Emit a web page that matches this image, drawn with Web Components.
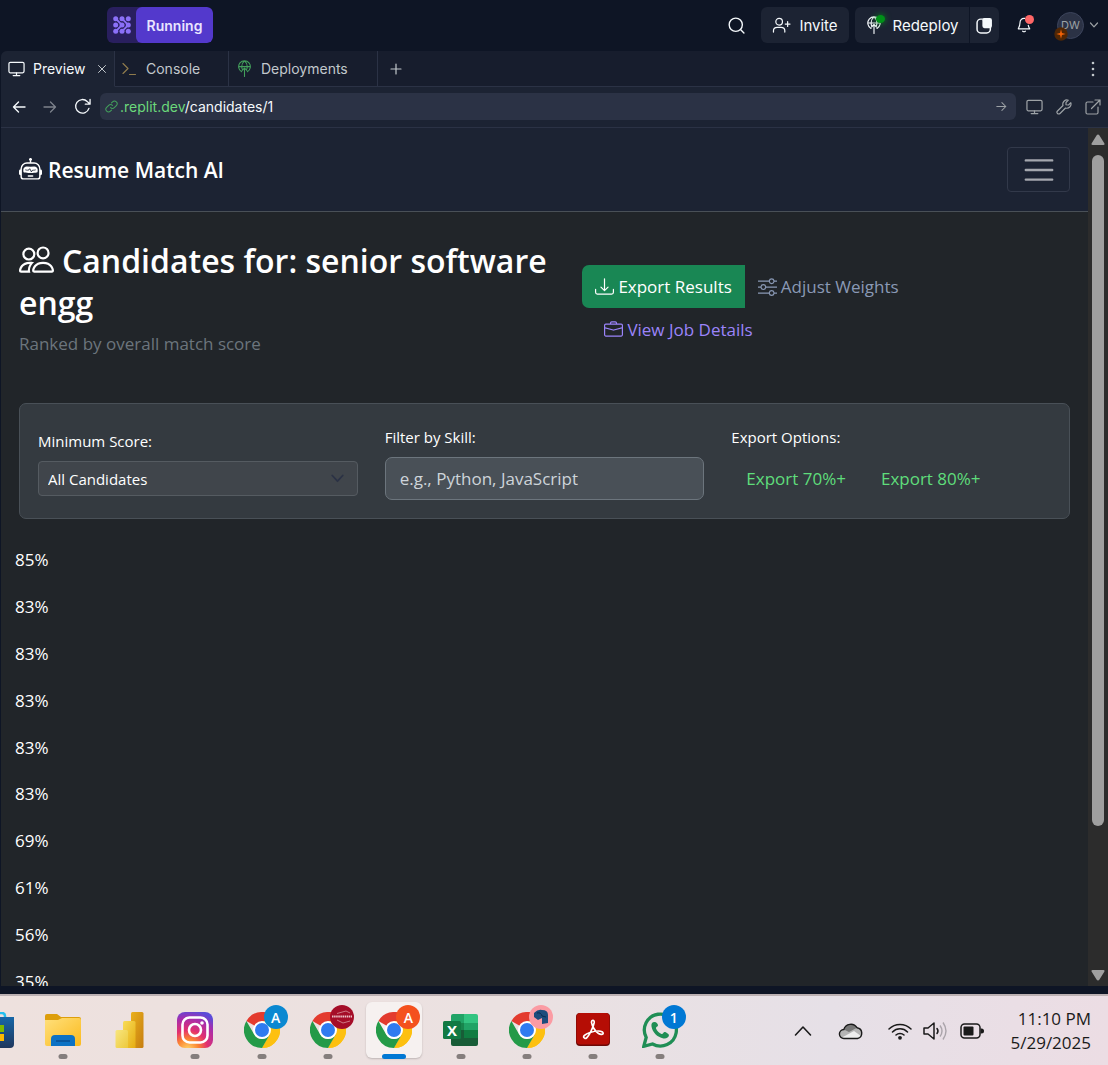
<!DOCTYPE html>
<html lang="en">
<head>
<meta charset="utf-8">
<title>Resume Match AI - Candidates</title>
<style>
html,body{height:100%}
body{margin:0;background:#0e1525;overflow:hidden;--ui:Inter,"Liberation Sans",sans-serif;--app:"Open Sans","Noto Sans",sans-serif;font-family:var(--ui)}
</style>
</head>
<body>
<work-space>
  <ide-header></ide-header>
  <ide-tabs></ide-tabs>
  <address-bar></address-bar>
  <web-view>
    <app-navbar>Resume Match AI</app-navbar>
    <candidates-head><span slot="title">Candidates for: senior software engg</span><span slot="sub">Ranked by overall match score</span></candidates-head>
    <filter-panel></filter-panel>
    <score-list scores="85 83 83 83 83 83 69 61 56 35"></score-list>
  </web-view>
  <task-bar></task-bar>
</work-space>
<script>
const define=(name,html,setup)=>customElements.define(name,class extends HTMLElement{
  constructor(){super();this.attachShadow({mode:'open'});}
  connectedCallback(){
    this.shadowRoot.innerHTML=`<style>:host,*{box-sizing:border-box}button,input,select{font:inherit;color:inherit;margin:0}button{border:0;background:none;padding:0;display:flex;align-items:center;justify-content:center}a{color:inherit;text-decoration:none}</style>`+html;
    if(setup)setup(this);
  }
});

const S='fill="none" stroke="currentColor" stroke-linecap="round" stroke-linejoin="round"';
const chrome=`<path d="M18 18 2.4 9A18 18 0 0 1 33.6 9z" fill="#e33b2e"/><path d="M18 0a18 18 0 0 1 15.6 9H18z" fill="#e33b2e"/><path d="M18 18 33.6 9A18 18 0 0 1 18 36l7.8-13.500z" fill="#fdc010"/><path d="M18 9h15.600A18 18 0 0 1 18 36l7.800-13.500z" fill="#fdc010"/><path d="M2.400 9A18 18 0 0 0 18 36l7.800-13.500a9 9 0 0 1-15.600 0z" fill="#249a48"/><circle cx="18" cy="18" r="9" fill="#fff"/><circle cx="18" cy="18" r="7" fill="#2f7bf0"/>`;
const icons={
 replit:['0 0 18 18','<g fill="#8b70f8"><circle cx="2.700" cy="2.700" r="2.500"/><circle cx="9" cy="2.700" r="2.500"/><circle cx="15.300" cy="2.700" r="2.500"/><circle cx="2.700" cy="9" r="2.500"/><circle cx="9" cy="9" r="2.500"/><circle cx="15.300" cy="9" r="2.500"/><circle cx="2.700" cy="15.300" r="2.500"/><circle cx="9" cy="15.300" r="2.500"/><circle cx="15.300" cy="15.300" r="2.500"/></g><path d="m2.700 2.700 6.300 6.300-6.300 6.300M9 2.700 15.300 9 9 15.300" fill="none" stroke="#8b70f8" stroke-width="1.800"/>'],
 search:['0 0 16 16',`<g ${S} stroke-width="1.300"><circle cx="7.300" cy="7.300" r="6.200"/><path d="m12 12 3 3"/></g>`],
 invite:['0 0 20 18',`<g ${S} stroke-width="1.300"><circle cx="7.500" cy="5" r="3.500"/><path d="M1.500 16v-1.500q0-3.500 4-3.500h4q4 0 4 3.500V16M16.500 5v5M14 7.500h5"/></g>`],
 deploy:['0 0 18 18',`<g ${S} stroke-width="1.150"><path d="M6 12.500a6.200 6.200 0 1 1 6 0M9 17.500V8.500M6.500 11 9 8.500 11.500 11M2.800 7h12.400M6.500 9.500C5.500 6 6.500 3 9 .900 11.500 3 12.500 6 11.500 9.500"/></g>`],
 panes:['0 0 16 16',`<rect x="1" y="2" width="12.500" height="13" rx="3.500" ${S} stroke-width="1.400"/><rect x="6" y="1" width="9" height="9.500" rx="2" fill="currentColor"/>`],
 bell:['0 0 16 18',`<g ${S} stroke-width="1.300"><path d="M9 1.600C5 1 3.500 4 3.500 6.500 3.500 10 2.500 11.500 1.500 13.300h13C13.500 12 13 11 12.800 9.500M6.500 16q1.500 1.200 3 0"/></g>`],
 chevron:['0 0 10 10',`<path d="M1.500 3 5 6.800 8.500 3" ${S} stroke-width="1.200"/>`],
 star:['0 0 14 14','<circle cx="7" cy="7" r="6.700" fill="#502705"/><path d="M7 2.300 8 6l3.700 1L8 8l-1 3.700L6 8 2.300 7 6 6z" fill="#f26207"/>'],
 monitor:['0 0 18 16',`<g ${S} stroke-width="1.300"><rect x="1" y="1" width="16" height="11" rx="1.500"/><path d="M9 12v3M5.500 15h7"/></g>`],
 close:['0 0 10 10',`<path d="m1.500 1.500 7 7m0-7-7 7" ${S}/>`],
 prompt:['0 0 14 14',`<path d="m1 1.500 5 5-5 5M7.500 12.500h6" ${S} stroke-width="1.150"/>`],
 plus:['0 0 12 12',`<path d="M6 1v10M1 6h10" ${S} stroke-width="1.200"/>`],
 dots:['0 0 4 16','<g fill="currentColor"><circle cx="2" cy="2" r="1.300"/><circle cx="2" cy="8" r="1.300"/><circle cx="2" cy="14" r="1.300"/></g>'],
 left:['0 0 14 14',`<path d="M13 7H1.500M6.500 2l-5 5 5 5" ${S} stroke-width="1.400"/>`],
 right:['0 0 14 14',`<path d="M1 7h11.500M7.500 2l5 5-5 5" ${S} stroke-width="1.300"/>`],
 reload:['0 0 18 18',`<path d="M15.800 11A7.200 7.200 0 1 1 14 3.700L17 6.500M17 1.500v5h-5" ${S} stroke-width="1.400"/>`],
 link:['0 0 14 14',`<g ${S} stroke-width="1.100"><path d="M6 8.200a2.800 2.800 0 0 0 4 0l2.200-2.200a2.800 2.800 0 0 0-4-4L7 3.200"/><path d="M8 5.800a2.800 2.800 0 0 0-4 0L1.800 8a2.800 2.800 0 0 0 4 4L7 10.800"/></g>`],
 wrench:['0 0 16 16',`<path d="M10 5.800 10 3.500 12.300 1.200A4.200 4.200 0 0 0 7 6.500L1.500 12a1.700 1.700 0 0 0 2.500 2.500L9.500 9A4.200 4.200 0 0 0 14.800 3.700L12.500 6z" ${S} stroke-width="1.150"/>`],
 open:['0 0 16 16',`<path d="M8 3H2.500Q1 3 1 4.500v9Q1 15 2.500 15h9q1.500 0 1.500-1.500V8M10 1h5v5M15 1 6.500 9.500" ${S} stroke-width="1.200"/>`],
 robot:['0 0 16 16','<path fill="currentColor" d="M6 12.500a.5.5 0 0 1 .5-.5h3a.5.5 0 0 1 0 1h-3a.5.5 0 0 1-.5-.5ZM3 8.062C3 6.760 4.235 5.765 5.530 5.886a26.580 26.580 0 0 0 4.940 0C11.765 5.765 13 6.760 13 8.062v1.157a.933.933 0 0 1-.765.935c-.845.147-2.340.346-4.235.346-1.895 0-3.390-.2-4.235-.346A.933.933 0 0 1 3 9.219V8.062Zm4.542-.827a.25.25 0 0 0-.217.068l-.920.900a24.767 24.767 0 0 1-1.871-.183.25.25 0 0 0-.068.495c.550.076 1.232.149 2.020.193a.25.25 0 0 0 .189-.071l.754-.736.847 1.710a.25.25 0 0 0 .404.062l.932-.970a25.286 25.286 0 0 0 1.922-.188.25.25 0 0 0-.068-.495c-.538.074-1.207.145-1.980.189a.25.25 0 0 0-.166.076l-.754.785-.842-1.700a.25.25 0 0 0-.182-.135Z"/><path fill="currentColor" d="M8.500 1.866a1 1 0 1 0-1 0V3h-2A4.500 4.500 0 0 0 1 7.500V8a1 1 0 0 0-1 1v2a1 1 0 0 0 1 1v1a2 2 0 0 0 2 2h10a2 2 0 0 0 2-2v-1a1 1 0 0 0 1-1V9a1 1 0 0 0-1-1v-.5A4.500 4.500 0 0 0 10.500 3h-2V1.866ZM14 7.500V13a1 1 0 0 1-1 1H3a1 1 0 0 1-1-1V7.500A3.500 3.500 0 0 1 5.500 4h5A3.500 3.500 0 0 1 14 7.500Z"/>'],
 people:['0 0 16 16','<path fill="currentColor" d="M15 14s1 0 1-1-1-4-5-4-5 3-5 4 1 1 1 1h8Zm-7.978-1A.261.261 0 0 1 7 12.996c.001-.264.167-1.030.760-1.720C8.312 10.629 9.282 10 11 10c1.717 0 2.687.630 3.240 1.276.593.690.758 1.457.760 1.720l-.008.002a.274.274 0 0 1-.014.002H7.022ZM11 7a2 2 0 1 0 0-4 2 2 0 0 0 0 4Zm3-2a3 3 0 1 1-6 0 3 3 0 0 1 6 0ZM6.936 9.280a5.880 5.880 0 0 0-1.230-.247A7.350 7.350 0 0 0 5 9c-4 0-5 3-5 4 0 .667.333 1 1 1h4.216A2.238 2.238 0 0 1 5 13c0-1.010.377-2.042 1.090-2.904.243-.294.526-.569.846-.816ZM4.920 10A5.493 5.493 0 0 0 4 13H1c0-.260.164-1.030.760-1.724.545-.636 1.492-1.256 3.160-1.275ZM1.500 5.500a3 3 0 1 1 6 0 3 3 0 0 1-6 0Zm3-2a2 2 0 1 0 0 4 2 2 0 0 0 0-4Z"/>'],
 download:['0 0 16 16','<path fill="currentColor" d="M.5 9.900a.5.5 0 0 1 .5.5v2.500a1 1 0 0 0 1 1h12a1 1 0 0 0 1-1v-2.500a.5.5 0 0 1 1 0v2.500a2 2 0 0 1-2 2H2a2 2 0 0 1-2-2v-2.500a.5.5 0 0 1 .5-.5z"/><path fill="currentColor" d="M7.646 11.854a.5.5 0 0 0 .708 0l3-3a.5.5 0 0 0-.708-.708L8.500 10.293V1.500a.5.5 0 0 0-1 0v8.793L5.354 8.146a.5.5 0 1 0-.708.708l3 3z"/>'],
 sliders:['0 0 16 16','<path fill="currentColor" fill-rule="evenodd" d="M11.500 2a1.500 1.500 0 1 0 0 3 1.500 1.500 0 0 0 0-3zM9.050 3a2.500 2.500 0 0 1 4.900 0H16v1h-2.050a2.500 2.500 0 0 1-4.900 0H0V3h9.050zM4.500 7a1.500 1.500 0 1 0 0 3 1.500 1.500 0 0 0 0-3zM2.050 8a2.500 2.500 0 0 1 4.900 0H16v1H6.950a2.500 2.500 0 0 1-4.900 0H0V8h2.050zm9.450 4a1.500 1.500 0 1 0 0 3 1.500 1.500 0 0 0 0-3zm-2.450 1a2.500 2.500 0 0 1 4.900 0H16v1h-2.050a2.500 2.500 0 0 1-4.900 0H0v-1h9.050z"/>'],
 briefcase:['0 0 16 16','<path fill="currentColor" d="M6.500 1A1.500 1.500 0 0 0 5 2.500V3H1.500A1.500 1.500 0 0 0 0 4.500v8A1.500 1.500 0 0 0 1.500 14h13a1.500 1.500 0 0 0 1.500-1.500v-8A1.500 1.500 0 0 0 14.500 3H11v-.5A1.500 1.500 0 0 0 9.500 1h-3zm0 1h3a.5.5 0 0 1 .5.5V3H6v-.5a.5.5 0 0 1 .5-.5zm1.886 6.914L15 7.151V12.500a.5.5 0 0 1-.5.5h-13a.5.5 0 0 1-.5-.5V7.150l6.614 1.764a1.500 1.500 0 0 0 .772 0zM1.500 4h13a.5.5 0 0 1 .5.5v1.616L8.129 7.948a.5.5 0 0 1-.258 0L1 6.116V4.500a.5.5 0 0 1 .5-.5z"/>'],
 menu:['0 0 30 30',`<path d="M4 7h22M4 15h22M4 23h22" ${S} stroke-width="2"/>`],
 up:['0 0 14 12','<path d="M7 .5q.8 0 1.300.8l5 8q.8 1.700-1 1.700H1.700q-1.800 0-1-1.700l5-8Q6.200.5 7 .5z" fill="#9f9f9f"/>'],
 down:['0 0 14 12','<path d="M7 11.500q.8 0 1.300-.8l5-8Q14.100 1 12.300 1H1.700Q-.1 1 .7 2.700l5 8q.5.800 1.300.800z" fill="#9f9f9f"/>'],
 chrome:['0 0 36 36',chrome],
 store:['0 0 36 36','<defs><linearGradient id="g" x1="0" y1="0" x2="0" y2="1"><stop stop-color="#1767a8"/><stop offset="1" stop-color="#20375d"/></linearGradient></defs><path d="M10 8V4q0-3 3-3h11q3 0 3 3v4" fill="none" stroke="#23c0f0" stroke-width="2.500"/><path d="M0 5h36v27q0 4-4 4H4q-4 0-4-4z" fill="url(#g)"/><path d="M9 13h7v7H9z" fill="#f25022"/><path d="M18 13h8v7h-8z" fill="#7fba00"/><path d="M9 22h7v7H9z" fill="#00a4ef"/><path d="M18 22h8v7h-8z" fill="#ffb900"/>'],
 folder:['0 0 36 36','<defs><linearGradient id="g" x1="0" y1="0" x2="1" y2="1"><stop stop-color="#ffe07c"/><stop offset="1" stop-color="#fbba1d"/></linearGradient></defs><path d="M0 4q0-2 2-2h10l4 3h18q2 0 2 2v8H0z" fill="#dd9e0b"/><path d="M0 8h13l4-2h17q2 0 2 2v24q0 2-2 2H2q-2 0-2-2z" fill="url(#g)"/><path d="M6 34v-7q0-4 4-4h16q4 0 4 4v7z" fill="#0d72c4"/><path d="M11 29h14" stroke="#0a4f92" stroke-width="1.500"/>'],
 bars:['0 0 36 36','<defs><linearGradient id="a" x1="0" y1="0" x2="1" y2="1"><stop stop-color="#eab11d"/><stop offset="1" stop-color="#c67d10"/></linearGradient><linearGradient id="b" x1="0" y1="0" x2="1" y2="1"><stop stop-color="#f8dc58"/><stop offset="1" stop-color="#e6ad12"/></linearGradient><linearGradient id="c" x1="0" y1="0" x2="1" y2="1"><stop stop-color="#f8e67f"/><stop offset="1" stop-color="#edc93c"/></linearGradient></defs><rect x="20" width="12.500" height="36" rx="1.500" fill="url(#a)"/><path d="M12 10.500Q12 9 13.500 9H23q1.500 0 1.500 1.500V36H12z" fill="url(#b)"/><path d="M4.500 19.500Q4.500 18 6 18h9.500q1.500 0 1.500 1.500V36H6q-1.500 0-1.500-1.500z" fill="url(#c)"/>'],
 insta:['0 0 36 36','<defs><radialGradient id="g" cx=".3" cy="1.050" r="1.100"><stop stop-color="#ffd86b"/><stop offset=".28" stop-color="#fb8332"/><stop offset=".5" stop-color="#e3306e"/><stop offset=".8" stop-color="#a62dae"/><stop offset="1" stop-color="#5b4bd8"/></radialGradient></defs><rect width="36" height="36" rx="8" fill="url(#g)"/><g fill="none" stroke="#fff" stroke-width="2.600"><rect x="5.500" y="5.500" width="25" height="25" rx="7"/><circle cx="18" cy="18" r="6"/></g><circle cx="25" cy="11" r="1.800" fill="#fff"/>'],
 excel:['0 0 36 36','<path d="M8 4q0-2 2-2h11v9H8z" fill="#21a366"/><path d="M21 2h12q2 0 2 2v7H21z" fill="#33c481"/><path d="M8 11h13v7H8z" fill="#18854d"/><path d="M21 11h14v7H21z" fill="#21a366"/><path d="M8 18h27v14q0 2-2 2H10q-2 0-2-2z" fill="#185c37"/><path d="M21 18h14v8H21z" fill="#107c41"/><rect x="0" y="9" width="18" height="18" rx="1.500" fill="#117a43"/><text x="9" y="23.500" font-family="Open Sans" font-size="15" font-weight="700" text-anchor="middle" fill="#fff">X</text>'],
 acrobat:['0 0 36 36','<rect x="1" y="1" width="34" height="33" rx="4" fill="#6d0906"/><rect x="1.500" y="1" width="33" height="31.500" rx="4" fill="#b50d05"/><path d="M9.500 26C7 25 10 22 15 20.500c5-1.500 10-2 12.500-.5 2 2-1 3.300-4 1.500-3.500-2.200-6.500-7.500-7-11 0-3 3-3 2.700.2C18.500 15 14 24 11.500 26q-1 .7-2 0z" fill="none" stroke="#fff" stroke-width="1.700"/>'],
 whatsapp:['0 0 36 36','<path d="M1.800 34.300 4.200 25.500A16 16 0 1 1 10.500 32z" fill="none" stroke="#1f8e55" stroke-width="3.300"/><path d="M12.500 10c-2.500 0-3.500 2-3 4.500 1.200 6 5.500 10.500 12 12 2.500.5 5.500-1 5.500-3.500 0-.8-3-3-4.500-3-1 0-1.500 2.500-3 2-2.500-1-4.500-3-5.500-5.500-.5-1.500 2-2 2-3 0-1.500-1.500-3.500-3.500-3.500z" fill="#1f8e55"/>'],
 caret:['0 0 18 12',`<path d="m1.500 10 7.500-8 7.500 8" ${S} stroke-width="1.600"/>`],
 cloud:['0 0 24 18','<path d="M5 16.500A4.500 4.500 0 0 1 4.800 7.500 7.300 7.300 0 0 1 18 5.700 5.500 5.500 0 0 1 18.500 16.500z" fill="#b5b5b5"/><path d="M4.800 7.500A7.300 7.300 0 0 1 18 5.700L10 10z" fill="#777"/><path d="M3 15.500 15 9l7 5q-1 2.500-3.500 2.500H5z" fill="#eee"/><path d="M5 16.500A4.500 4.500 0 0 1 4.800 7.500 7.300 7.300 0 0 1 18 5.700 5.500 5.500 0 0 1 18.500 16.500z" fill="none" stroke="#1a1a1a" stroke-width="1.400"/>'],
 wifi:['0 0 24 18',`<g ${S} stroke-width="1.500"><path d="M1 7a15.500 15.500 0 0 1 22 0M4.500 10a10.500 10.500 0 0 1 15 0M8 13a5.800 5.800 0 0 1 8 0"/></g><circle cx="12" cy="15.800" r="1.900" fill="currentColor"/>`],
 sound:['0 0 24 20',`<path d="M1 7h4l6-5v16l-6-5H1z" ${S} stroke-width="1.500"/><path d="M14 7.500q2 2.500 0 5" ${S} stroke-width="1.500"/><g fill="none" stroke="#aaa4aa" stroke-width="1.400"><path d="M17 4.500q4 5.500 0 11M20 1.500q6 8.500 0 17"/></g>`],
 battery:['0 0 24 16','<rect x="1" y="1" width="19" height="14" rx="3.500" fill="none" stroke="currentColor" stroke-width="1.500"/><rect x="3.500" y="3.500" width="10" height="9" rx="1" fill="currentColor"/><path d="M20.500 5.500h1q2.500 0 2.500 2.500t-2.500 2.500h-1z" fill="currentColor"/>']
};
define('ui-icon','<style>:host{display:inline-block;flex:none;width:var(--w,18px);height:var(--h,var(--w,18px))}svg{display:block;width:100%;height:100%}</style><svg aria-hidden="true"></svg>',el=>{
  const [box,body]=icons[el.getAttribute('name')];
  const s=el.shadowRoot.querySelector('svg');s.setAttribute('viewBox',box);s.innerHTML=body;
});

define('work-space','<style>:host{display:flex;flex-direction:column;height:100vh;background:#0e1525}</style><slot></slot>');

define('ide-header',`<style>
:host{display:flex;align-items:center;height:51px;flex:none;padding:0 9px 1px 107px;color:#f5f9fc;font-size:15px}
.run{display:flex;height:36px;border-radius:6px;background:#291f5e;overflow:hidden}
.run .logo{width:29px}.run .state{width:77px;background:#5339cc;border-radius:6px;font-weight:600;font-size:14px;color:#e9e5ff}
.right{display:flex;align-items:center;margin-left:auto}
.pill{height:36px;background:#1c2333;gap:8px}
.inv{width:88px;border-radius:6px;margin:0 6px 0 16px}
.dep{width:114px;border-radius:6px 0 0 6px;position:relative;margin-right:1px;gap:9px}
.dep i{position:absolute;left:21px;top:8px;width:9px;height:8px;border-radius:50%;background:#009118;box-shadow:0 0 6px #009118}
.pane{width:29px;border-radius:0 6px 6px 0;margin-right:17px}
.bell{position:relative;margin-right:25px}.bell i{position:absolute;right:-2px;top:-2px;width:9px;height:9px;border-radius:50%;background:#ff6666}
.ava{position:relative;width:27px;height:27px;border-radius:50%;background:#2b3245;border:1px solid #3c445c;font-size:11px;color:#9da2a6;margin-right:5px}
.ava ui-icon{position:absolute;left:-4px;bottom:-3px;--w:14px}
.chev{color:#9da2a6}
</style>
<div class="run"><button class="logo" aria-label="Replit"><ui-icon name="replit"></ui-icon></button><button class="state">Running</button></div>
<div class="right">
<button aria-label="Search"><ui-icon name="search" style="--w:17px"></ui-icon></button>
<button class="pill inv"><ui-icon name="invite" style="--w:19px;--h:17px"></ui-icon>Invite</button>
<button class="pill dep"><ui-icon name="deploy"></ui-icon><i></i>Redeploy</button>
<button class="pill pane" aria-label="Panes"><ui-icon name="panes" style="--w:17px"></ui-icon></button>
<button class="bell" aria-label="Notifications"><ui-icon name="bell" style="--w:16px"></ui-icon><i></i></button>
<button class="ava">DW<ui-icon name="star"></ui-icon></button>
<button class="chev" aria-label="Account menu"><ui-icon name="chevron" style="--w:10px"></ui-icon></button>
</div>`);

define('ide-tabs',`<style>
:host{display:flex;height:36px;flex:none;margin-left:1px;background:#171d2d;color:#c2c8cc;font-size:14px;border-radius:6px 0 0 0}
button{justify-content:flex-start;border-right:1px solid #2b3245;border-bottom:1px solid #2b3245;padding:0 7px;gap:8px}
.on{width:114px;background:#1c2333;color:#f5f9fc;border-bottom-color:#1c2333;border-radius:6px 0 0 0}
.con{width:114px;gap:10px}.dp{width:149px}
.on .x{margin-left:auto;--w:10px;color:#c2c8cc}
.rest{flex:1;display:flex;align-items:center;justify-content:space-between;border-bottom:1px solid #2b3245;padding:0 13px 0 12px}
.rest button{border:0;padding:0}
</style>
<button class="on"><ui-icon name="monitor" style="--w:17px;--h:16px"></ui-icon>Preview<ui-icon class="x" name="close"></ui-icon></button>
<button class="con"><ui-icon name="prompt" style="--w:14px;color:#8f7b4c"></ui-icon>Console</button>
<button class="dp"><ui-icon name="deploy" style="--w:17px;color:#43a05c"></ui-icon>Deployments</button>
<div class="rest"><button aria-label="New tab"><ui-icon name="plus" style="--w:12px"></ui-icon></button><button aria-label="More"><ui-icon name="dots" style="--w:4px;--h:16px"></ui-icon></button></div>`);

define('address-bar',`<style>
:host{display:flex;align-items:center;height:41px;flex:none;margin-left:1px;padding:0 7px 1px 11px;background:#1c2333;border-bottom:1px solid #2b3245;color:#9da2a6}
.nav{display:flex;gap:17px;color:#f5f9fc}.nav button:nth-child(2){color:#7d828c}
.field{flex:1;display:flex;align-items:center;height:27px;margin:0 10px 0 9px;padding:0 9px 0 5px;background:#2b3245;border-radius:6px;font-size:14px}
.url{flex:1;padding-left:2px;color:#f5f9fc;white-space:nowrap}.url b{font-weight:400;color:#6bd97b}
.tools{display:flex;gap:13px}
</style>
<div class="nav"><button aria-label="Back"><ui-icon name="left" style="--w:14px"></ui-icon></button><button aria-label="Forward"><ui-icon name="right" style="--w:14px"></ui-icon></button><button aria-label="Reload"><ui-icon name="reload" style="--w:17px"></ui-icon></button></div>
<div class="field"><ui-icon name="link" style="--w:13px;color:#43a05c"></ui-icon><div class="url" role="textbox" aria-label="Address" contenteditable="true" spellcheck="false"><b>.replit.dev</b>/candidates/1</div><button aria-label="Go"><ui-icon name="right" style="--w:11px"></ui-icon></button></div>
<div class="tools"><button aria-label="Devices"><ui-icon name="monitor" style="--w:17px;--h:16px"></ui-icon></button><button aria-label="Developer tools"><ui-icon name="wrench" style="--w:16px"></ui-icon></button><button aria-label="Open in new tab"><ui-icon name="open" style="--w:16px"></ui-icon></button></div>`);

define('web-view',`<style>
:host{display:flex;flex:1;min-height:0;margin:0 0 8px 1px;background:#212529;color:#fff;font-family:var(--app);font-size:17px;line-height:28px}
.page{flex:1;overflow:hidden;border-radius:0 0 0 6px}
.bar{width:20px;flex:none;display:flex;flex-direction:column;align-items:center;background:#2c2c2c;padding:6px 0 5px}
.track{flex:1;display:flex;margin:9px 0 6px}
.thumb{width:12px;height:83%;border-radius:6px;background:#9f9f9f}
</style><div class="page"><slot></slot></div>
<div class="bar"><ui-icon name="up" style="--w:14px;--h:12px"></ui-icon><div class="track"><div class="thumb"></div></div><ui-icon name="down" style="--w:14px;--h:12px"></ui-icon></div>`);

define('app-navbar',`<style>
:host{display:flex;align-items:center;justify-content:space-between;height:84px;padding:0 18px;background:#1c2333;border-bottom:1px solid #495057}
a{display:flex;align-items:center;gap:6px;font-size:21px;font-weight:600}
button{width:63px;height:45px;border:1px solid #32394a;border-radius:4px;color:#a4a7ae}
</style><a href="#"><ui-icon name="robot" style="--w:23px"></ui-icon><span><slot></slot></span></a><button aria-label="Toggle navigation"><ui-icon name="menu" style="--w:36px"></ui-icon></button>`);

define('candidates-head',`<style>
:host{display:grid;grid-template-columns:11fr 10fr;gap:27px;align-items:center;padding:28px 18px 27px}
h1{margin:0 0 6px;font-size:32px;line-height:42px;font-weight:600}
h1 ui-icon{--w:35px;vertical-align:-4px;margin-right:8px}
p{margin:0 0 18px;color:#6c757d}
.acts{display:flex;flex-wrap:wrap}
a,button{display:flex;align-items:center;height:43px;gap:4px;padding:0 13px;white-space:nowrap}
.exp{background:#198754;border-radius:7px 0 0 7px}
.adj{color:#8a99b5}.job{color:#9b84fa;padding-left:22px;flex-basis:100%}
ui-icon{--w:19px}
</style><div><h1><ui-icon name="people"></ui-icon><slot name="title"></slot></h1><p><slot name="sub"></slot></p></div>
<div class="acts"><button class="exp"><ui-icon name="download"></ui-icon>Export Results</button><button class="adj"><ui-icon name="sliders"></ui-icon>Adjust Weights</button><a class="job" href="#"><ui-icon name="briefcase"></ui-icon>View Job Details</a></div>`);

define('filter-panel',`<style>
:host{display:grid;grid-template-columns:repeat(3,1fr);gap:27px;align-items:center;margin:0 18px;padding:21px 18px 18px;background:#343a40;border:1px solid #495057;border-radius:7px}
.f{display:flex;flex-direction:column;gap:8px}
label,.l{font-size:15px;line-height:24px}
.sel{display:grid;align-items:center}
select{grid-area:1/1;appearance:none;height:35px;width:100%;padding:0 9px;font-size:15px;background:#40454b;border:1px solid #555b61;border-radius:4px}
.sel ui-icon{grid-area:1/1;justify-self:end;margin-right:13px;--w:15px;color:#2b3245;pointer-events:none}
input{height:43px;width:100%;padding:0 14px;background:#495057;border:1px solid #6c757d;border-radius:7px}
input::placeholder{color:#ced4da;opacity:1}
.x{display:flex;height:43px;color:#5fdd7b;gap:35px;padding-left:15px}
</style>
<div class="f"><label for="m">Minimum Score:</label><div class="sel"><select id="m"><option>All Candidates</option></select><ui-icon name="chevron"></ui-icon></div></div>
<div class="f"><label for="s">Filter by Skill:</label><input id="s" type="text" placeholder="e.g., Python, JavaScript"></div>
<div class="f"><span class="l">Export Options:</span><div class="x"><button>Export 70%+</button><button>Export 80%+</button></div></div>`);

define('score-list',`<style>
:host{display:block;margin-top:18px}
ul{list-style:none;margin:0;padding:0 14px;height:468px;display:grid;grid-auto-rows:1fr;align-items:center}
</style><ul></ul>`,el=>{el.shadowRoot.querySelector('ul').innerHTML=el.getAttribute('scores').split(' ').map(s=>`<li>${s}%</li>`).join('');});

define('task-app',`<style>
:host{display:flex;justify-content:center}
button{position:relative;width:56px;height:56px;border-radius:6px}
:host([active]) button{background:#f6f1f0;box-shadow:0 1px 2px #0003}
.app{--w:36px}
.ind{position:absolute;bottom:-1px;left:50%;translate:-50%;width:9px;height:5px;border-radius:3px;background:#857e7d}
:host([active]) .ind{width:24px;background:#0078d4}
:host([idle]) .ind{display:none}
.badge{position:absolute;left:30px;top:3px;width:24px;height:24px;border-radius:50%;display:flex;align-items:center;justify-content:center;font:600 14px "Open Sans",sans-serif;color:#fff;background:var(--badge)}
.badge svg{width:24px;height:24px}
</style><button><span class="ind"></span></button>`,el=>{
  const b=el.shadowRoot.querySelector('button');
  const i=document.createElement('ui-icon');i.className='app';i.setAttribute('name',el.getAttribute('app'));
  b.prepend(i);b.setAttribute('aria-label',el.getAttribute('app'));
  if(el.hasAttribute('badge')){
    const s=document.createElement('span');s.className='badge';const v=el.getAttribute('badge');
    if(v==='crest')s.innerHTML='<svg viewBox="0 0 24 24"><path d="M7 8.500 16 6l4 2M7 15l6 3 7-2" fill="none" stroke="#ce7884"/><path d="M2 11.500h20" stroke="#ecc2c8" stroke-width="2" stroke-dasharray="1.500 .6"/></svg>';
    else if(v==='dog')s.innerHTML='<svg viewBox="0 0 24 24"><path d="M5 8q4-4 8-3 6 0 6 5v8l-6 1v-6l-4 2-4-3z" fill="#1c4c7c"/><path d="M8 8q4-1 5 3l4 1" fill="none" stroke="#0a2c52"/></svg>';
    else s.textContent=v;
    b.append(s);
  }
});

define('task-bar',`<style>
:host{display:flex;justify-content:space-between;height:71px;flex:none;overflow:hidden;border-top:2px solid #bcb1b3;background:linear-gradient(90deg,#eee1de,#ebe1e1 45%,#e6e0e7 75%,#ecdde4);color:#1a1a1a;font-family:var(--app)}
.apps{display:grid;grid-template-columns:repeat(11,1fr);width:730px;flex:none;margin-left:-37px;padding-top:6px}
.tray{display:flex;align-items:center;padding-right:17px}
.tray button:nth-child(1){margin-right:26px}.tray button:nth-child(2){margin-right:24px}.tray button:nth-child(3){margin-right:11px}.tray button:nth-child(4){margin-right:13px}
.clock{display:block;margin-left:26px;text-align:right;font-size:17px;line-height:24px;white-space:nowrap}
.clock span{display:block}
</style>
<div class="apps"><task-app app="store" idle></task-app><task-app app="folder"></task-app><task-app app="bars" idle></task-app><task-app app="insta"></task-app><task-app app="chrome" badge="A" style="--badge:#0a88d1"></task-app><task-app app="chrome" badge="crest" style="--badge:#a50d28"></task-app><task-app app="chrome" badge="A" active style="--badge:#f4511e"></task-app><task-app app="excel"></task-app><task-app app="chrome" badge="dog" style="--badge:#fb9ba3"></task-app><task-app app="acrobat"></task-app><task-app app="whatsapp" badge="1" style="--badge:#0078d4"></task-app></div>
<div class="tray"><button aria-label="Hidden icons"><ui-icon name="caret" style="--w:18px;--h:12px"></ui-icon></button><button aria-label="OneDrive"><ui-icon name="cloud" style="--w:26px;--h:18px"></ui-icon></button><button aria-label="Network"><ui-icon name="wifi" style="--w:24px;--h:18px"></ui-icon></button><button aria-label="Volume"><ui-icon name="sound" style="--w:24px;--h:20px"></ui-icon></button><button aria-label="Battery"><ui-icon name="battery" style="--w:24px;--h:16px"></ui-icon></button><button class="clock"><span>11:10 PM</span><span>5/29/2025</span></button></div>`);
</script>
</body>
</html>
